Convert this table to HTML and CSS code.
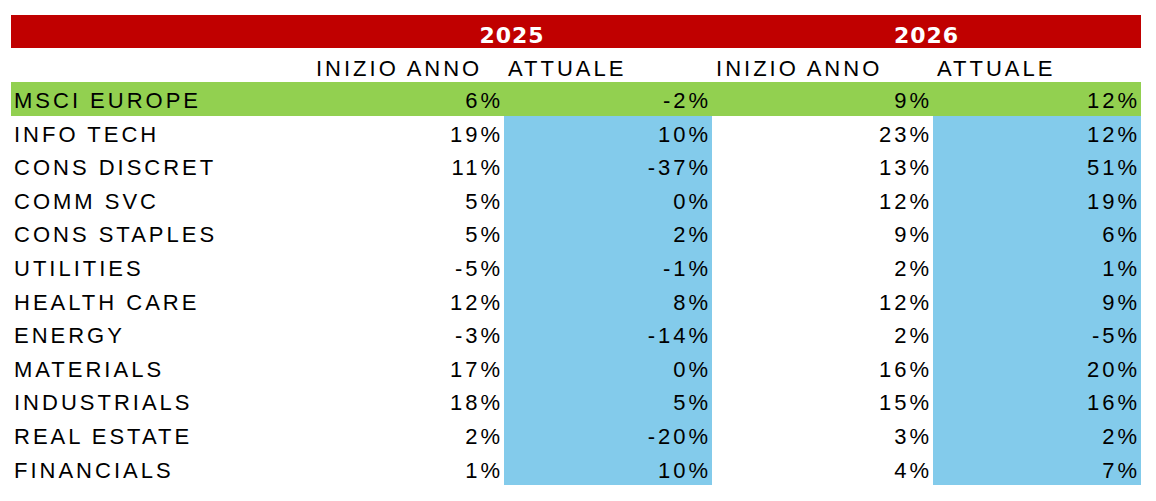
FILE: index.html
```html
<!DOCTYPE html>
<html lang="it">
<head>
<meta charset="utf-8">
<title>Settori</title>
<link rel="stylesheet" href="styles.css">
</head>
<body>
<table class="grid">
  <colgroup>
    <col class="c-label"><col class="c-1"><col class="c-2"><col class="c-3"><col class="c-4">
  </colgroup>
  <thead>
    <tr class="years">
      <th></th>
      <th colspan="2">2025</th>
      <th colspan="2">2026</th>
    </tr>
    <tr class="subs">
      <th></th>
      <th>INIZIO ANNO</th>
      <th>ATTUALE</th>
      <th>INIZIO ANNO</th>
      <th>ATTUALE</th>
    </tr>
  </thead>
  <tbody>
    <tr class="index"><td class="lbl">MSCI EUROPE</td><td>6%</td><td>-2%</td><td>9%</td><td>12%</td></tr>
    <tr><td class="lbl">INFO TECH</td><td>19%</td><td class="hl">10%</td><td>23%</td><td class="hl">12%</td></tr>
    <tr><td class="lbl">CONS DISCRET</td><td>11%</td><td class="hl">-37%</td><td>13%</td><td class="hl">51%</td></tr>
    <tr><td class="lbl">COMM SVC</td><td>5%</td><td class="hl">0%</td><td>12%</td><td class="hl">19%</td></tr>
    <tr><td class="lbl">CONS STAPLES</td><td>5%</td><td class="hl">2%</td><td>9%</td><td class="hl">6%</td></tr>
    <tr><td class="lbl">UTILITIES</td><td>-5%</td><td class="hl">-1%</td><td>2%</td><td class="hl">1%</td></tr>
    <tr><td class="lbl">HEALTH CARE</td><td>12%</td><td class="hl">8%</td><td>12%</td><td class="hl">9%</td></tr>
    <tr><td class="lbl">ENERGY</td><td>-3%</td><td class="hl">-14%</td><td>2%</td><td class="hl">-5%</td></tr>
    <tr><td class="lbl">MATERIALS</td><td>17%</td><td class="hl">0%</td><td>16%</td><td class="hl">20%</td></tr>
    <tr><td class="lbl">INDUSTRIALS</td><td>18%</td><td class="hl">5%</td><td>15%</td><td class="hl">16%</td></tr>
    <tr><td class="lbl">REAL ESTATE</td><td>2%</td><td class="hl">-20%</td><td>3%</td><td class="hl">2%</td></tr>
    <tr><td class="lbl">FINANCIALS</td><td>1%</td><td class="hl">10%</td><td>4%</td><td class="hl">7%</td></tr>
  </tbody>
</table>
</body>
</html>
```
FILE: styles.css
```css
html, body {
  margin: 0;
  padding: 0;
  background: #ffffff;
}
body {
  padding: 15px 0 0 11px;
  font-family: "Liberation Sans", Arial, sans-serif;
  color: #000000;
}
.grid {
  border-collapse: collapse;
  border-spacing: 0;
  table-layout: fixed;
  width: 1130px;
}
.c-label { width: 301px; }
.c-1 { width: 192px; }
.c-2 { width: 208px; }
.c-3 { width: 221px; }
.c-4 { width: 208px; }

.grid th, .grid td {
  padding: 0;
  font-size: 22px;
  line-height: 25px;
  font-weight: normal;
  letter-spacing: 3px;
  vertical-align: top;
  white-space: nowrap;
  overflow: hidden;
}
.years th {
  background: #c00000;
  color: #ffffff;
  font-family: "DejaVu Sans", sans-serif;
  font-weight: bold;
  letter-spacing: 1px;
  text-align: center;
  height: 33px;
  box-sizing: border-box;
  padding-top: 8px;
}
.subs th {
  text-align: left;
  height: 34px;
  box-sizing: border-box;
  padding-top: 7.5px;
  padding-left: 4px;
}
.grid tbody tr {
  height: 33.6px;
}
.grid td {
  text-align: right;
  padding-top: 6px;
  padding-right: 1px;
}
.grid td.lbl {
  text-align: left;
  padding-left: 3px;
  padding-right: 0;
}
.index td {
  background: #92d050;
}
.grid td.hl {
  background: #83cbeb;
}
```
